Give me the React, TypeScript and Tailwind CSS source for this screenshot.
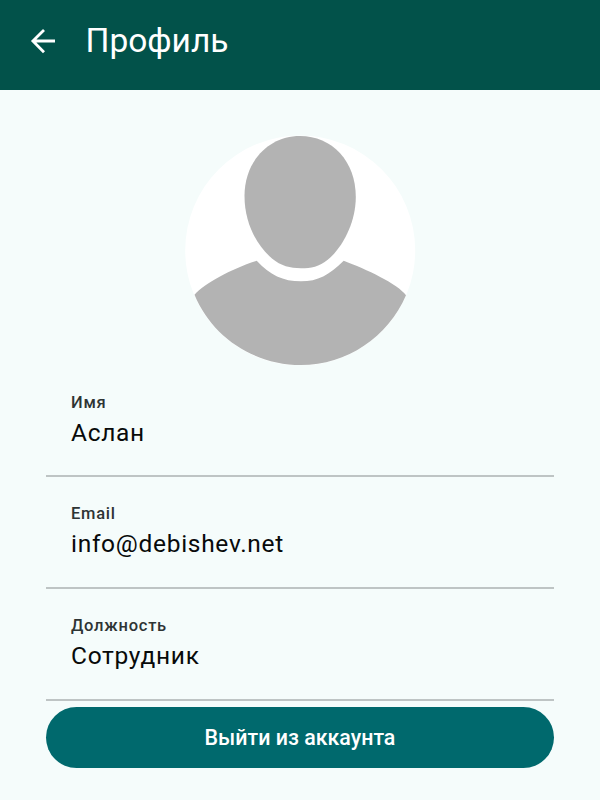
const fields = [
  { label: 'Имя', value: 'Аслан' },
  { label: 'Email', value: 'info@debishev.net' },
  { label: 'Должность', value: 'Сотрудник' },
];

function Avatar() {
  return (
    <svg className="mx-auto mt-[45px] block h-[230px] w-[232px] shrink-0" viewBox="184 135 232 230" aria-hidden="true">
      <circle cx="300.2" cy="250.5" r="115" fill="#fff" />
      <path
        d="M300 136C332 136 355.8 161 355.8 197C355.8 222 343 247 328 259.5C319 267 311 268.2 301 268.2C290 268.2 281 266 272 258.5C256 245 244.5 222 244.5 196C244.5 162 268 136 300 136Z"
        fill="#b3b3b3"
      />
      <path
        d="M256.7 260.7C270 275 283 281.3 301 281.3C318 281.3 329 275 343.7 260.7C366 269 398 284 406 295.2C388 337 347 365 301 365C254 365 212 337 194.5 294.7C205 283 231 269 256.7 260.7Z"
        fill="#b3b3b3"
      />
    </svg>
  );
}

export default function App() {
  return (
    <main className="flex h-[800px] w-[600px] flex-col overflow-hidden bg-[#f5fcfb] font-['Roboto',sans-serif]">
      <header className="flex h-[90px] shrink-0 bg-[#02524a] pb-[8px] text-white">
        <button className="ml-[30px] flex w-[26px] items-center" aria-label="Назад">
          <svg className="h-[26px] w-[26px]" viewBox="0 0 26 26" fill="none" stroke="currentColor" strokeWidth="2.8">
            <path d="M25 13H3M14 1.9L2.9 13L14 24.3" />
          </svg>
        </button>
        <h1 className="ml-[29.5px] pt-[21px] text-[33.5px] leading-[40px] font-normal">Профиль</h1>
      </header>
      <Avatar />
      <section className="mx-[46px] mt-[0.5px]">
        {fields.map((field) => (
          <div key={field.label} className="h-[111.7px] border-b-2 border-[#bec4c4] pl-[25px] pt-[25px]">
            <div className="text-[16.5px] leading-[24px] font-medium tracking-[0.75px] text-[#2e3434]">{field.label}</div>
            <div className="text-[24.5px] leading-[36px] tracking-[0.7px] text-[#080a0a]">{field.value}</div>
          </div>
        ))}
      </section>
      <button className="mx-[46px] mt-[6px] h-[61px] shrink-0 rounded-full bg-[#00696d] pt-[2px] text-[21.4px] font-medium text-white">
        Выйти из аккаунта
      </button>
    </main>
  );
}
